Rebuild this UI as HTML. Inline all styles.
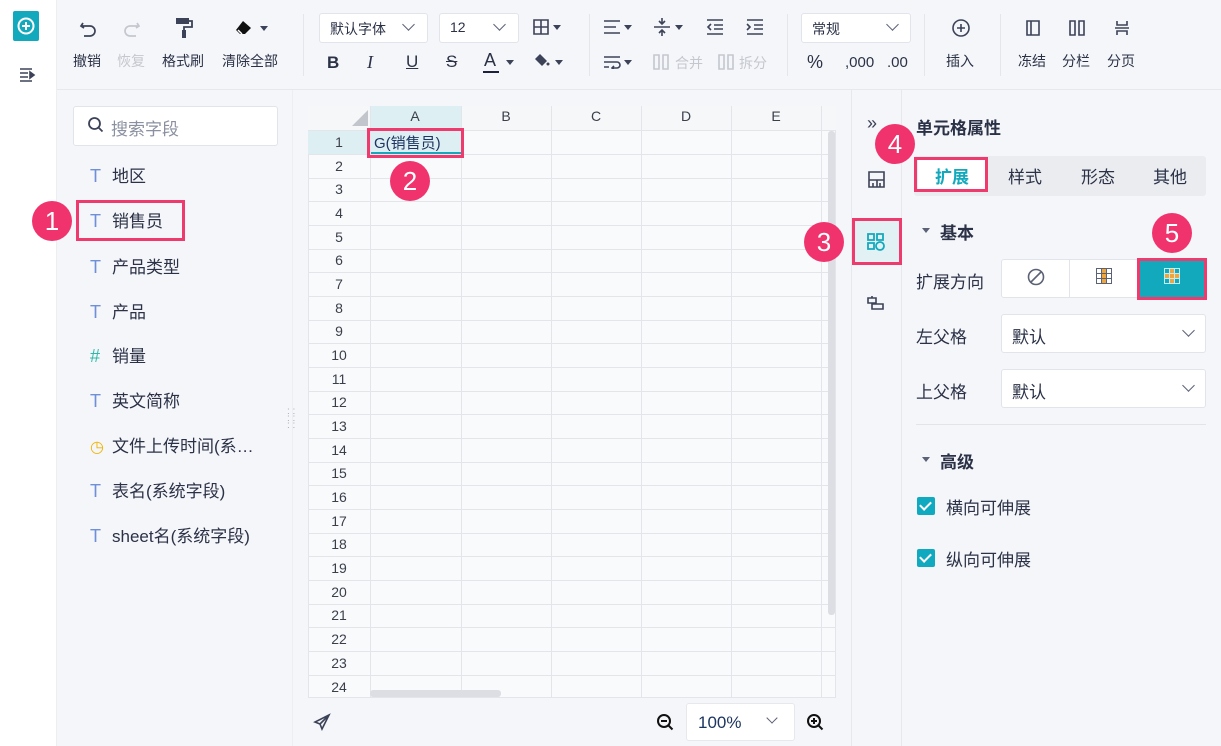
<!DOCTYPE html>
<html><head><meta charset="utf-8"><style>
*{box-sizing:border-box;margin:0;padding:0}
body{width:1221px;height:746px;overflow:hidden;background:#f5f6f9;font-family:"Liberation Sans","Noto Sans CJK SC",sans-serif;color:#2b3247;position:relative}
.a{position:absolute}
.t{font-size:14px;white-space:nowrap}
.lbl{position:absolute;font-size:14px;top:51px;white-space:nowrap}
.sel{position:absolute;background:#fff;border:1px solid #e1e4ea;border-radius:3px;font-size:14px}
.chev{position:absolute;width:9px;height:9px;border-right:1.6px solid #5b6275;border-bottom:1.6px solid #5b6275;transform:rotate(45deg)}
.tri{position:absolute;width:0;height:0;border-left:4px solid transparent;border-right:4px solid transparent;border-top:5px solid #3c4358}
.field{position:absolute;left:90px;font-size:17px;white-space:nowrap}
.field b{font-weight:normal;color:#6f8fd8;display:inline-block;width:22px;font-size:18px}
.badge{position:absolute;width:40px;height:40px;border-radius:50%;background:#f0336d;color:#fff;font-size:26px;text-align:center;line-height:40px}
.rb{position:absolute;border:3px solid #ef3a6e}
.rh{position:absolute;left:308px;width:62px;text-align:center;font-size:14px;color:#3b3f4a}
.hl{position:absolute;left:308px;width:528px;height:1px;background:#e3e5ea}
.vl{position:absolute;top:106px;height:592px;width:1px;background:#e3e5ea}
.ch{position:absolute;top:108px;font-size:14px;color:#3b3f4a;text-align:center;width:90px}
.tab{position:absolute;top:163px;font-size:17px;width:60px;text-align:center}
.cb{position:absolute;left:917px;width:18px;height:18px;background:#10aac0;border-radius:2px}
.cb:after{content:"";position:absolute;left:5px;top:2px;width:5px;height:9px;border-right:2.5px solid #fff;border-bottom:2.5px solid #fff;transform:rotate(45deg)}
</style></head><body>
<div class="a" style="left:0;top:0;width:57px;height:746px;background:#fff;border-right:1px solid #eceef2"></div>
<div class="a" style="left:13px;top:11px;width:26px;height:30px;background:#12a9bd;border-radius:2px"></div>
<svg class="a" style="left:16px;top:16px" width="20" height="20" viewBox="0 0 20 20"><circle cx="10" cy="10" r="7.5" fill="none" stroke="#fff" stroke-width="2"/><path d="M10 6v8M6 10h8" stroke="#fff" stroke-width="2"/></svg>
<svg class="a" style="left:19px;top:67px" width="18" height="16" viewBox="0 0 18 16"><path d="M1 2h12M1 6h8M1 10h8M1 14h12M11 5l4 3-4 3z" stroke="#3c4358" stroke-width="1.6" fill="#3c4358"/></svg>
<div class="a" style="left:57px;top:89px;width:1164px;height:1px;background:#e6e8ed"></div>
<svg class="a" style="left:78px;top:18px" width="20" height="20" viewBox="0 0 20 20"><path d="M5 5l-2 3 3 2M3 8h9a5 5 0 010 10H6" fill="none" stroke="#3c4358" stroke-width="1.7"/></svg>
<svg class="a" style="left:122px;top:18px" width="20" height="20" viewBox="0 0 20 20"><path d="M15 5l2 3-3 2M17 8H8a5 5 0 000 10h6" fill="none" stroke="#c4c7cf" stroke-width="1.7"/></svg>
<svg class="a" style="left:174px;top:16px" width="20" height="22" viewBox="0 0 20 22"><rect x="2" y="2" width="13" height="6" fill="#3c4358"/><path d="M15 5h3v6h-8v4" fill="none" stroke="#3c4358" stroke-width="1.8"/><rect x="8" y="14" width="4" height="8" fill="#3c4358"/></svg>
<svg class="a" style="left:234px;top:18px" width="22" height="20" viewBox="0 0 22 20"><path d="M9 3l8 7-6 6H6l-4-4z" fill="#111"/><path d="M4 12l4 4" stroke="#fff" stroke-width="1.5"/></svg>
<div class="tri" style="left:260px;top:26px"></div>
<div class="lbl" style="left:73px">撤销</div><div class="lbl" style="left:117px;color:#c4c7cf">恢复</div><div class="lbl" style="left:162px">格式刷</div><div class="lbl" style="left:222px">清除全部</div>
<div class="a" style="left:303px;top:14px;width:1px;height:62px;background:#e4e6eb"></div>
<div class="sel" style="left:319px;top:13px;width:109px;height:30px"><span class="a" style="left:10px;top:5px">默认字体</span><div class="chev" style="left:84px;top:6px"></div></div>
<div class="sel" style="left:439px;top:13px;width:80px;height:30px"><span class="a" style="left:10px;top:5px">12</span><div class="chev" style="left:55px;top:6px"></div></div>
<svg class="a" style="left:533px;top:19px" width="16" height="16" viewBox="0 0 16 16"><path d="M1 1h14v14H1zM8 1v14M1 8h14" fill="none" stroke="#3c4358" stroke-width="1.6"/></svg><div class="tri" style="left:553px;top:25px"></div>
<div class="a t" style="left:327px;top:53px;font-size:17px;font-weight:bold">B</div>
<div class="a t" style="left:367px;top:52px;font-size:18px;font-style:italic;font-family:'Liberation Serif',serif">I</div>
<div class="a t" style="left:406px;top:52px;font-size:17px;text-decoration:underline">U</div>
<div class="a t" style="left:446px;top:52px;font-size:17px;text-decoration:line-through">S</div>
<div class="a t" style="left:484px;top:50px;font-size:18px">A</div><div class="a" style="left:483px;top:71px;width:16px;height:2px;background:#1d2140"></div><div class="tri" style="left:506px;top:60px"></div>
<svg class="a" style="left:533px;top:52px" width="18" height="18" viewBox="0 0 18 18"><path d="M7 2l7 7-5 5-7-7z" fill="#3c4358"/><circle cx="15" cy="12" r="1.5" fill="#3c4358"/></svg><div class="tri" style="left:555px;top:60px"></div>
<div class="a" style="left:589px;top:14px;width:1px;height:62px;background:#e4e6eb"></div>
<svg class="a" style="left:603px;top:19px" width="18" height="16" viewBox="0 0 18 16"><path d="M1 2h16M1 8h12M1 14h16" stroke="#3c4358" stroke-width="1.6"/></svg><div class="tri" style="left:624px;top:25px"></div>
<svg class="a" style="left:653px;top:17px" width="18" height="20" viewBox="0 0 18 20"><path d="M1 10h16M9 1v6M6 4l3 3 3-3M9 19v-6M6 16l3-3 3 3" fill="none" stroke="#3c4358" stroke-width="1.6"/></svg><div class="tri" style="left:675px;top:25px"></div>
<svg class="a" style="left:706px;top:19px" width="18" height="16" viewBox="0 0 18 16"><path d="M1 1h16M8 6h9M8 10h9M1 15h16M5 5L2 8l3 3" fill="none" stroke="#3c4358" stroke-width="1.6"/></svg>
<svg class="a" style="left:746px;top:19px" width="18" height="16" viewBox="0 0 18 16"><path d="M1 1h16M8 6h9M8 10h9M1 15h16M1 5l3 3-3 3" fill="none" stroke="#3c4358" stroke-width="1.6"/></svg>
<svg class="a" style="left:603px;top:55px" width="18" height="14" viewBox="0 0 18 14"><path d="M1 2h16M1 7h13a3 3 0 010 6H9M11 11l-2 2 2 2M1 12h5" fill="none" stroke="#3c4358" stroke-width="1.6"/></svg><div class="tri" style="left:624px;top:60px"></div>
<svg class="a" style="left:653px;top:54px" width="16" height="16" viewBox="0 0 16 16"><path d="M1 1h5v14H1zM10 1h5v14h-5z" fill="none" stroke="#c4c7cf" stroke-width="1.6"/></svg><div class="a t" style="left:675px;top:53px;color:#c4c7cf">合并</div>
<svg class="a" style="left:718px;top:54px" width="16" height="16" viewBox="0 0 16 16"><path d="M1 1h5v14H1zM10 1h5v14h-5z" fill="none" stroke="#c4c7cf" stroke-width="1.6"/></svg><div class="a t" style="left:739px;top:53px;color:#c4c7cf">拆分</div>
<div class="a" style="left:787px;top:14px;width:1px;height:62px;background:#e4e6eb"></div>
<div class="sel" style="left:801px;top:13px;width:110px;height:30px"><span class="a" style="left:10px;top:5px">常规</span><div class="chev" style="left:86px;top:6px"></div></div>
<div class="a t" style="left:807px;top:52px;font-size:18px">%</div>
<div class="a t" style="left:845px;top:54px;font-size:15px">,000</div>
<div class="a t" style="left:887px;top:54px;font-size:15px">.00</div>
<div class="a" style="left:924px;top:14px;width:1px;height:62px;background:#e4e6eb"></div>
<svg class="a" style="left:951px;top:18px" width="20" height="20" viewBox="0 0 20 20"><circle cx="10" cy="10" r="8" fill="none" stroke="#3c4358" stroke-width="1.6"/><path d="M10 6v8M6 10h8" stroke="#3c4358" stroke-width="1.6"/></svg>
<div class="lbl" style="left:946px">插入</div>
<div class="a" style="left:1000px;top:14px;width:1px;height:62px;background:#e4e6eb"></div>
<svg class="a" style="left:1026px;top:20px" width="14" height="16" viewBox="0 0 14 16"><path d="M1 1h12v14H1zM5 1v14" fill="none" stroke="#3c4358" stroke-width="1.6"/></svg>
<svg class="a" style="left:1069px;top:20px" width="16" height="16" viewBox="0 0 16 16"><path d="M1 1h5v14H1zM10 1h5v14h-5z" fill="none" stroke="#3c4358" stroke-width="1.6"/></svg>
<svg class="a" style="left:1114px;top:20px" width="16" height="16" viewBox="0 0 16 16"><path d="M3 1v4h10V1M1 8h14M3 15v-4h10v4" fill="none" stroke="#3c4358" stroke-width="1.6"/></svg>
<div class="lbl" style="left:1018px">冻结</div><div class="lbl" style="left:1062px">分栏</div><div class="lbl" style="left:1107px">分页</div>
<div class="a" style="left:292px;top:90px;width:1px;height:656px;background:#eceef2"></div>
<div class="a" style="left:73px;top:106px;width:205px;height:40px;background:#fff;border:1px solid #e1e4ea;border-radius:3px"></div>
<svg class="a" style="left:87px;top:116px" width="18" height="18" viewBox="0 0 18 18"><circle cx="7.5" cy="7.5" r="5.5" fill="none" stroke="#3c4358" stroke-width="1.8"/><path d="M11.5 11.5l4 4" stroke="#3c4358" stroke-width="1.8"/></svg>
<div class="a" style="left:111px;top:115px;font-size:17px;color:#8b90a0">搜索字段</div>
<div class="field" style="top:162px"><b>T</b>地区</div>
<div class="field" style="top:207px"><b>T</b>销售员</div>
<div class="field" style="top:253px"><b>T</b>产品类型</div>
<div class="field" style="top:298px"><b>T</b>产品</div>
<div class="field" style="top:342px"><b style="color:#2eb8a6">#</b>销量</div>
<div class="field" style="top:387px"><b>T</b>英文简称</div>
<div class="field" style="top:432px"><b style="color:#f0b400;font-size:16px">◷</b>文件上传时间(系…</div>
<div class="field" style="top:477px"><b>T</b>表名(系统字段)</div>
<div class="field" style="top:522px"><b>T</b>sheet名(系统字段)</div>
<div class="rb" style="left:76px;top:200px;width:109px;height:41px"></div>
<div class="badge" style="left:32px;top:201px">1</div>
<div class="a" style="left:287px;top:408px;color:#aab;font-size:10px;line-height:7px">: :<br>: :<br>: :</div>
<div class="a" style="left:308px;top:106px;width:528px;height:592px;background:#f9fafc;border:1px solid #e3e5ea"></div>
<div class="a" style="left:308px;top:106px;width:528px;height:24px;background:#f6f7f9"></div>
<div class="a" style="left:370px;top:106px;width:91px;height:24px;background:#ddeff3"></div>
<div class="a" style="left:308px;top:130px;width:62px;height:24px;background:#ddeff3"></div>
<div class="a" style="left:352px;top:110px;width:0;height:0;border-left:16px solid transparent;border-bottom:16px solid #c2c5cc"></div>
<div class="ch" style="left:370px">A</div><div class="ch" style="left:461px">B</div><div class="ch" style="left:551px">C</div><div class="ch" style="left:641px">D</div><div class="ch" style="left:731px">E</div>
<div class="vl" style="left:370px"></div><div class="vl" style="left:461px"></div><div class="vl" style="left:551px"></div><div class="vl" style="left:641px"></div><div class="vl" style="left:731px"></div><div class="vl" style="left:821px"></div>
<div class="hl" style="top:130px"></div><div class="hl" style="top:154px"></div><div class="hl" style="top:178px"></div><div class="hl" style="top:201px"></div><div class="hl" style="top:225px"></div><div class="hl" style="top:249px"></div><div class="hl" style="top:272px"></div><div class="hl" style="top:296px"></div><div class="hl" style="top:320px"></div><div class="hl" style="top:343px"></div><div class="hl" style="top:367px"></div><div class="hl" style="top:391px"></div><div class="hl" style="top:414px"></div><div class="hl" style="top:438px"></div><div class="hl" style="top:462px"></div><div class="hl" style="top:485px"></div><div class="hl" style="top:509px"></div><div class="hl" style="top:533px"></div><div class="hl" style="top:556px"></div><div class="hl" style="top:580px"></div><div class="hl" style="top:604px"></div><div class="hl" style="top:627px"></div><div class="hl" style="top:651px"></div><div class="hl" style="top:675px"></div>
<div class="rh" style="top:134px">1</div><div class="rh" style="top:158px">2</div><div class="rh" style="top:181px">3</div><div class="rh" style="top:205px">4</div><div class="rh" style="top:229px">5</div><div class="rh" style="top:252px">6</div><div class="rh" style="top:276px">7</div><div class="rh" style="top:300px">8</div><div class="rh" style="top:323px">9</div><div class="rh" style="top:347px">10</div><div class="rh" style="top:371px">11</div><div class="rh" style="top:394px">12</div><div class="rh" style="top:418px">13</div><div class="rh" style="top:442px">14</div><div class="rh" style="top:465px">15</div><div class="rh" style="top:489px">16</div><div class="rh" style="top:513px">17</div><div class="rh" style="top:536px">18</div><div class="rh" style="top:560px">19</div><div class="rh" style="top:584px">20</div><div class="rh" style="top:607px">21</div><div class="rh" style="top:631px">22</div><div class="rh" style="top:655px">23</div><div class="rh" style="top:679px">24</div>
<div class="a" style="left:371px;top:131px;width:90px;height:23px;background:#ddeff3;border-bottom:2px solid #12a9bd"></div>
<div class="a" style="left:374px;top:132px;font-size:15px;color:#1d3560">G(销售员)</div>
<div class="rb" style="left:367px;top:128px;width:97px;height:30px"></div>
<div class="badge" style="left:390px;top:161px">2</div>
<div class="a" style="left:828px;top:131px;width:7px;height:484px;background:#dcdee3;border-radius:3px"></div>
<div class="a" style="left:370px;top:690px;width:131px;height:7px;background:#dcdee3;border-radius:3px"></div>
<svg class="a" style="left:313px;top:713px" width="18" height="18" viewBox="0 0 18 18"><path d="M16 2L2 9l5 2 2 5zM7 11l9-9" fill="none" stroke="#3c4358" stroke-width="1.6"/></svg>
<svg class="a" style="left:656px;top:713px" width="18" height="18" viewBox="0 0 18 18"><circle cx="8" cy="8" r="6" fill="none" stroke="#111" stroke-width="2"/><path d="M5 8h6M12.5 12.5l4 4" stroke="#111" stroke-width="2"/></svg>
<div class="sel" style="left:686px;top:703px;width:109px;height:38px;border-color:#e6e8ec"><span class="a" style="left:11px;top:9px;font-size:17px;color:#1d3560">100%</span><div class="chev" style="left:81px;top:10px;width:8px;height:8px"></div></div>
<svg class="a" style="left:806px;top:713px" width="18" height="18" viewBox="0 0 18 18"><circle cx="8" cy="8" r="6" fill="none" stroke="#111" stroke-width="2"/><path d="M5 8h6M8 5v6M12.5 12.5l4 4" stroke="#111" stroke-width="2"/></svg>
<div class="a" style="left:851px;top:90px;width:1px;height:656px;background:#e6e8ed"></div>
<div class="a" style="left:901px;top:90px;width:1px;height:656px;background:#e6e8ed"></div>
<div class="a" style="left:867px;top:113px;font-size:18px;color:#3c4358">»</div>
<svg class="a" style="left:868px;top:171px" width="17" height="17" viewBox="0 0 17 17"><path d="M1 1h15v15H1zM1 9h15M9 9v7M5 12v4M12 12v4" fill="none" stroke="#3c4358" stroke-width="1.6"/></svg>
<div class="a" style="left:853px;top:219px;width:47px;height:43px;background:#e2f1f4"></div>
<svg class="a" style="left:867px;top:233px" width="18" height="18" viewBox="0 0 18 18"><path d="M1 1h6v6H1zM10 1h6v6h-6zM1 10h6v6H1z" fill="none" stroke="#12a9bd" stroke-width="1.8"/><circle cx="13" cy="13" r="4" fill="none" stroke="#12a9bd" stroke-width="1.8"/></svg>
<div class="rb" style="left:852px;top:218px;width:50px;height:47px"></div>
<div class="badge" style="left:804px;top:222px">3</div>
<svg class="a" style="left:867px;top:295px" width="17" height="17" viewBox="0 0 17 17"><path d="M1 3h8v5H1zM5 8v6h11v-5H5M5 3V1" fill="none" stroke="#3c4358" stroke-width="1.6"/></svg>
<div class="a" style="left:916px;top:114px;font-size:17px;font-weight:bold">单元格属性</div>
<div class="a" style="left:914px;top:156px;width:292px;height:40px;background:#eaecf0;border-radius:3px"></div>
<div class="a" style="left:918px;top:159px;width:68px;height:32px;background:#fff"></div>
<div class="tab" style="left:922px;color:#12a9bd;font-weight:bold">扩展</div>
<div class="tab" style="left:995px">样式</div><div class="tab" style="left:1068px">形态</div><div class="tab" style="left:1140px">其他</div>
<div class="rb" style="left:914px;top:157px;width:74px;height:35px"></div>
<div class="badge" style="left:875px;top:124px">4</div>
<div class="tri" style="left:922px;top:228px;border-top-color:#5b6275"></div>
<div class="a" style="left:940px;top:219px;font-size:17px;font-weight:bold">基本</div>
<div class="a t" style="left:916px;top:268px;font-size:17px">扩展方向</div>
<div class="a" style="left:1001px;top:259px;width:205px;height:39px;background:#fff;border:1px solid #e1e4ea;border-radius:3px"></div>
<div class="a" style="left:1069px;top:260px;width:1px;height:37px;background:#e1e4ea"></div>
<svg class="a" style="left:1027px;top:268px" width="18" height="18" viewBox="0 0 18 18"><circle cx="9" cy="9" r="7.5" fill="none" stroke="#5b6275" stroke-width="1.6"/><path d="M4 14L14 4" stroke="#5b6275" stroke-width="1.6"/></svg>
<svg class="a" style="left:1096px;top:268px" width="16" height="16" viewBox="0 0 16 16"><rect x="5" y="0" width="6" height="16" fill="#f0a63c"/><path d="M0.5 0.5h15v15H.5zM5.5 0v16M10.5 0v16M0 5.5h16M0 10.5h16" fill="none" stroke="#5b6275" stroke-width="1"/></svg>
<div class="a" style="left:1138px;top:259px;width:68px;height:39px;background:#12a9bd"></div>
<svg class="a" style="left:1164px;top:268px" width="16" height="16" viewBox="0 0 16 16"><rect x="0" y="5" width="16" height="6" fill="#f0a63c"/><rect x="5" y="0" width="6" height="16" fill="#f0a63c"/><path d="M0.5 0.5h15v15H.5zM5.5 0v16M10.5 0v16M0 5.5h16M0 10.5h16" fill="none" stroke="#bfeff5" stroke-width="1"/></svg>
<div class="rb" style="left:1137px;top:258px;width:70px;height:42px"></div>
<div class="badge" style="left:1152px;top:213px">5</div>
<div class="a t" style="left:916px;top:323px;font-size:17px">左父格</div>
<div class="sel" style="left:1001px;top:314px;width:205px;height:39px"><span class="a" style="left:10px;top:8px;font-size:17px">默认</span><div class="chev" style="left:182px;top:11px"></div></div>
<div class="a t" style="left:916px;top:378px;font-size:17px">上父格</div>
<div class="sel" style="left:1001px;top:369px;width:205px;height:39px"><span class="a" style="left:10px;top:8px;font-size:17px">默认</span><div class="chev" style="left:182px;top:11px"></div></div>
<div class="a" style="left:916px;top:424px;width:290px;height:1px;background:#e1e4ea"></div>
<div class="tri" style="left:922px;top:457px;border-top-color:#5b6275"></div>
<div class="a" style="left:940px;top:448px;font-size:17px;font-weight:bold">高级</div>
<div class="cb" style="top:497px"></div><div class="a t" style="left:946px;top:494px;font-size:17px">横向可伸展</div>
<div class="cb" style="top:549px"></div><div class="a t" style="left:946px;top:546px;font-size:17px">纵向可伸展</div>
</body></html>
